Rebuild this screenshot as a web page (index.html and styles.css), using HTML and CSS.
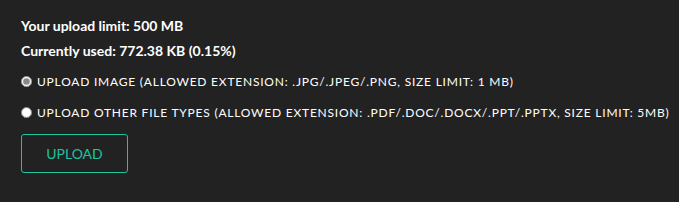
FILE: index.html
```html
<!DOCTYPE html>
<html>
<head>
    <meta charset="UTF-8">
    <title>Upload</title>
    <link rel="stylesheet" href="styles.css">
</head>
<body>
    <div class="content">
        <p class="quota">Your upload limit: 500 MB</p>
        <p class="quota">Currently used: 772.38 KB (0.15%)</p>
        <label class="choice"><input type="radio" name="kind" checked> Upload image (allowed extension: .jpg/.jpeg/.png, size limit: 1 MB)</label>
        <label class="choice"><input type="radio" name="kind"> Upload other file types (allowed extension: .pdf/.doc/.docx/.ppt/.pptx, size limit: 5MB)</label>
        <button class="button">UPLOAD</button>
    </div>
</body>
</html>
```

FILE: styles.css
```css
html {
    font-family: Lato, "Liberation Sans", sans-serif;
    background-color: #222222;
}

body {
    margin: 0;
}

.content {
    padding: 18px 0 18px 21px;
    color: #ffffff;
}

.quota {
    font-size: 14px;
    font-weight: bold;
    margin: 0 0 9px 0;
    line-height: 16px;
}

.choice {
    display: flex;
    align-items: center;
    gap: 5px;
    font-size: 12px;
    letter-spacing: 0.78px;
    text-transform: uppercase;
    white-space: nowrap;
    margin-top: 14px;
    line-height: 17px;
}

.choice input {
    margin: 0;
    width: 11px;
    height: 11px;
    accent-color: #888;
}

.button {
    margin-top: 13px;
    width: 107px;
    height: 39px;
    background: none;
    border: 1px solid #1cc4a0;
    border-radius: 3px;
    color: #1cc4a0;
    font-family: Lato, sans-serif;
    font-size: 14px;
}
```
